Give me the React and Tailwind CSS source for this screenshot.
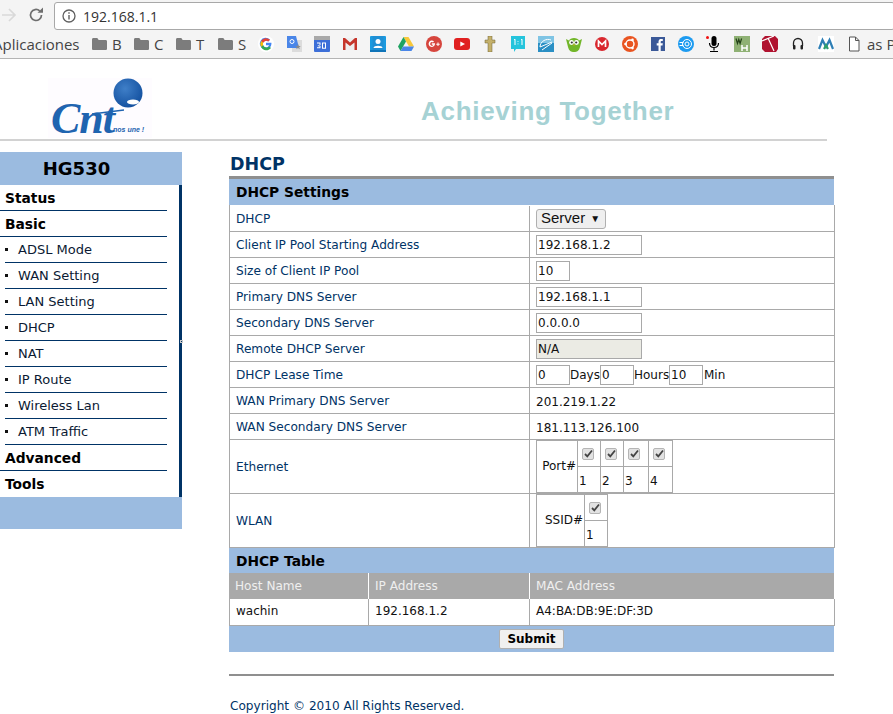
import React from "react";

const labels = "border-b border-[#a9a9a9] flex h-[26px] box-border";

function Folder() {
  return (
    <svg width="15" height="12" viewBox="0 0 15 12">
      <path d="M0 1.500C0 .7.6 0 1.300 0h4l1.400 2h7c.7 0 1.300.6 1.300 1.300v7.400c0 .7-.6 1.300-1.300 1.300H1.300C.6 12 0 11.400 0 10.700z" fill="#7c7c7c" />
    </svg>
  );
}

function Mark({ name, children }) {
  return (
    <svg width="16" height="16" viewBox="0 0 16 16" className="shrink-0" aria-label={name}>
      {children}
    </svg>
  );
}

const bookmarks = [
  ["Google", <>
    <circle cx="8" cy="8" r="8" fill="#fff" />
    <path d="M13.400 6.800H8v2.500h3.100A3.300 3.300 0 1 1 10.200 5.500l1.800-1.800A5.800 5.800 0 1 0 13.400 6.800z" fill="#4285f4" />
    <path d="M3.100 5a5.800 5.800 0 0 1 8.900-1.300L10.200 5.500A3.300 3.300 0 0 0 5.200 6.700z" fill="#ea4335" />
    <path d="M3.100 5l2.100 1.700a3.300 3.300 0 0 0 0 2.600L3.100 11a5.800 5.800 0 0 1 0-6z" fill="#fbbc05" />
    <path d="M3.100 11l2.100-1.700a3.300 3.300 0 0 0 5.900.9l1.900 1.700A5.800 5.800 0 0 1 3.100 11z" fill="#34a853" />
  </>],
  ["Translate", <>
    <rect x="6" y="4" width="10" height="12" fill="#dcdcdc" />
    <path d="M1 0h9l3 12H1z" fill="#4a86e8" />
    <circle cx="6" cy="5.500" r="2" fill="none" stroke="#fff" strokeWidth="1" />
    <path d="M12 8l.8 2h2l-1.600 1.300.6 2-1.800-1.200-1.700 1.200.6-2L9.300 10h2z" fill="#8a8a8a" />
  </>],
  ["Calendar", <>
    <rect width="16" height="16" rx="1" fill="#3d6fd8" />
    <rect width="16" height="4" fill="#a9a9a9" />
    <path d="M3 6.500h3.500v2.500H4.500v.8h2v2.500H3v-1h2.500v-1H3.800v-.8h1.700V7.500H3zM8 6.500h4v6.300H8zM9 7.500v4.300h2V7.500z" fill="#fff" />
  </>],
  ["Gmail", <>
    <rect x="1" y="2" width="14" height="12" fill="#eee" />
    <path d="M1 2h2l5 4.500L13 2h2v12h-2.500V6.500L8 10 3.500 6.500V14H1z" fill="#c5352b" />
  </>],
  ["Contacts", <>
    <rect width="16" height="16" rx="1" fill="#1a9ae0" />
    <rect x="2.500" y="0" width="11" height="14" fill="#1f8fd4" />
    <circle cx="8" cy="5.500" r="2.500" fill="#fff" />
    <path d="M3.500 12c0-3 9-3 9 0z" fill="#fff" />
    <rect y="14" width="16" height="2" fill="#0f74b8" />
  </>],
  ["Drive", <>
    <path d="M5.500 1h5l5.500 9.500h-5z" fill="#f8c83a" />
    <path d="M5.500 1L0 10.500 2.500 15l5.500-9.500z" fill="#1ea362" />
    <path d="M2.500 15h11l2.500-4.500H5z" fill="#4a86e8" />
  </>],
  ["Google Plus", <>
    <circle cx="8" cy="8" r="8" fill="#d6453d" />
    <path d="M9 7.300H5.800v1.500h1.700a1.800 1.800 0 1 1-.5-2.400l1-1a3.200 3.200 0 1 0 1 2.400z" fill="#fff" />
    <path d="M11.500 6.500h1v1.200h1.200v1h-1.200v1.200h-1V8.700h-1.200v-1h1.200z" fill="#fff" />
  </>],
  ["YouTube", <>
    <rect y="2" width="16" height="12" rx="3" fill="#e02020" />
    <path d="M6.300 5.500L11 8l-4.700 2.500z" fill="#fff" />
  </>],
  ["Cross", <>
    <path d="M6 0h4v4h3v3h-3v9H6V7H3V4h3z" fill="#c4b06a" stroke="#6d6136" strokeWidth=".5" />
  </>],
  ["1:1", <>
    <path d="M1 0h14v13H6l-2 3v-3H1z" fill="#25c4dc" />
    <path d="M4 4l1-.8V9M11 4l1-.8V9M8 5v.8M8 7.500v.8" stroke="#fff" strokeWidth="1" fill="none" />
  </>],
  ["Swoosh", <>
    <rect width="16" height="16" fill="#2a8fc4" />
    <rect width="16" height="7" fill="#7fc4e4" />
    <path d="M2 11C2 5 9 2 13 4M2 11l12-5M4 14l10-7" stroke="#fff" strokeWidth="1" fill="none" />
  </>],
  ["Owl", <>
    <path d="M0 3l3 1.500C4 1 12 1 13 4.500L16 3l-2 8c-1 4-3 5-6 5s-5-1-6-5z" fill="#72b62a" />
    <circle cx="5.500" cy="6.500" r="2.400" fill="#fff" />
    <circle cx="10.500" cy="6.500" r="2.400" fill="#fff" />
    <circle cx="5.800" cy="6.500" r="1.100" fill="#333" />
    <circle cx="10.200" cy="6.500" r="1.100" fill="#333" />
    <path d="M7 8.500h2L8 10z" fill="#e8a020" />
  </>],
  ["Mega", <>
    <circle cx="8" cy="8" r="7" fill="#d9272e" />
    <path d="M4.500 11V5l3.500 3.500L11.500 5v6" stroke="#fff" strokeWidth="1.700" fill="none" />
  </>],
  ["Ubuntu", <>
    <circle cx="8" cy="8" r="8" fill="#e95420" />
    <circle cx="8" cy="8" r="4" fill="none" stroke="#fff" strokeWidth="1.400" />
    <circle cx="3.500" cy="8" r="1.300" fill="#fff" />
    <circle cx="10.500" cy="3.900" r="1.300" fill="#fff" />
    <circle cx="10.500" cy="12.100" r="1.300" fill="#fff" />
  </>],
  ["Facebook", <>
    <rect x="1" y="1" width="14" height="14" fill="#3b5998" />
    <path d="M10.700 15V9.500h1.800l.3-2.200h-2.100V6c0-.6.2-1 1-1h1.100V3.100c-1.900-.3-4.300-.3-4.300 2.600v1.600H6.700v2.200h1.800V15z" fill="#fff" />
  </>],
  ["Disc", <>
    <circle cx="8" cy="8" r="8" fill="#1d9bf0" />
    <circle cx="9" cy="8" r="4.500" fill="none" stroke="#fff" strokeWidth="1" />
    <circle cx="9" cy="8" r="2" fill="none" stroke="#fff" strokeWidth="1" />
    <path d="M1.500 6.500h4M1.500 9.500h4" stroke="#fff" strokeWidth="1" />
  </>],
  ["Mic", <>
    <circle cx="1.500" cy="1.500" r="1.500" fill="#f01010" />
    <rect x="5.500" y="0" width="5" height="10" rx="2.500" fill="#000" />
    <path d="M3.500 7c0 6 9 6 9 0M8 12v2.500M4 15.500h8" stroke="#000" strokeWidth="1.200" fill="none" />
  </>],
  ["WH", <>
    <rect width="16" height="16" fill="#8fb174" />
    <path d="M2 2.500l1.500 5 1.300-4 1.300 4 1.500-5" stroke="#234018" strokeWidth="1.200" fill="none" />
    <path d="M8 9v6M13 9v6M8 12h5" stroke="#fff" strokeWidth="1.500" fill="none" />
  </>],
  ["Red", <>
    <path d="M3 0h10l3 3v10l-2 3H3l-3-3V3z" fill="#b0122f" />
    <path d="M0 5l12-5M6 2l6 13" stroke="#fff" strokeWidth="1.200" fill="none" />
  </>],
  ["Headphones", <>
    <path d="M3.500 10V7a4.500 4.500 0 0 1 9 0v3" stroke="#222" strokeWidth="1.300" fill="none" />
    <rect x="3" y="9" width="2.500" height="4.500" rx="1" fill="#222" />
    <rect x="10.500" y="9" width="2.500" height="4.500" rx="1" fill="#222" />
  </>],
  ["M", <>
    <rect width="16" height="16" fill="#fff" />
    <path d="M1 13l3.500-9 3.500 7 3.500-7 3.500 9" stroke="#2f7fb5" strokeWidth="2.200" fill="none" />
    <path d="M6 13l2-4 2 4" stroke="#2ea06a" strokeWidth="2" fill="none" />
  </>],
  ["Page", <>
    <path d="M3.500 1h6l3.500 3.500V15H3.500zM9.500 1v3.500H13" stroke="#555" strokeWidth="1" fill="#fff" />
  </>],
];

function Toolbar() {
  return (
    <div className="h-[59px] border-b border-[#b4b4b4] bg-[#f4f4f4] font-['Open_Sans',sans-serif] overflow-hidden whitespace-nowrap box-border">
      <div className="h-[30px] flex items-center">
        <svg width="16" height="16" viewBox="0 0 16 16" className="ml-[1px]">
          <path d="M1 8h13M8 2l6 6-6 6" stroke="#d9d9d9" strokeWidth="1.700" fill="none" />
        </svg>
        <svg width="16" height="16" viewBox="0 0 16 16" className="ml-[11px]">
          <path d="M13.500 8A5.500 5.500 0 1 1 11.700 3.900" stroke="#6e6e6e" strokeWidth="1.700" fill="none" />
          <path d="M9.500 5.800H15V.5z" fill="#6e6e6e" />
        </svg>
        <div className="ml-[10px] flex-1 h-[28px] -mr-[2px] mt-[2px] bg-white border border-[#a8a8a8] rounded-[3px] flex items-center pl-[7px] box-border">
          <svg width="14" height="14" viewBox="0 0 14 14">
            <circle cx="7" cy="7" r="6" fill="none" stroke="#5f5f5f" strokeWidth="1.300" />
            <path d="M7 6v4.500M7 3.300v1.400" stroke="#5f5f5f" strokeWidth="1.400" />
          </svg>
          <span className="ml-[7px] text-[14px] text-[#333]">192.168.1.1</span>
        </div>
      </div>
      <div className="h-[28px] flex items-center text-[15px] text-[#444]">
        <span className="-ml-[7px] w-[99px] shrink-0">Aplicaciones</span>
        {["B", "C", "T", "S"].map((l) => (
          <div key={l} className="w-[42px] shrink-0 flex items-center gap-[5px] last:w-[41px]">
            <Folder />
            <span>{l}</span>
          </div>
        ))}
        <div className="flex items-center gap-3 ml-[-2px]">
          {bookmarks.map(([name, art]) => (
            <Mark key={name} name={name}>{art}</Mark>
          ))}
        </div>
        <span className="ml-[5px]">as P</span>
      </div>
    </div>
  );
}

function Logo() {
  return (
    <div className="relative w-[104px] h-[60px] ml-[48px] bg-[#fefcff] text-[#1f64b0] overflow-hidden">
      <svg width="104" height="60" viewBox="0 0 104 60" className="absolute left-0 top-0">
        <defs>
          <radialGradient id="ball" cx="0.4" cy="0.35" r="0.7">
            <stop offset="0" stopColor="#3f7fc8" />
            <stop offset="1" stopColor="#124f9e" />
          </radialGradient>
        </defs>
        <circle cx="80" cy="15" r="14.500" fill="url(#ball)" />
        <ellipse cx="85" cy="24" rx="6" ry="2.500" fill="#fff" />
        <path d="M44 36l32-4" stroke="#1f64b0" strokeWidth="1.500" />
      </svg>
      <span className="absolute left-[3px] top-[19px] font-['Liberation_Serif',serif] italic font-bold text-[44px] leading-[44px] tracking-[-1px]">Cnt</span>
      <span className="absolute left-[65px] top-[47px] font-['Liberation_Sans',sans-serif] italic font-bold text-[7px] leading-[10px]">nos une !</span>
    </div>
  );
}

function Banner() {
  return (
    <div className="w-[827px] h-[82px] border-b-2 border-[#d2d2d2] box-border flex items-start pt-[19px]">
      <Logo />
      <span className="ml-[269px] mt-[18px] font-['Liberation_Sans',sans-serif] font-bold text-[26px] leading-[30px] text-[#a6d2d4] tracking-[0.7px]">Achieving Together</span>
    </div>
  );
}

function Sidebar() {
  const top = "h-[26px] flex items-center border-b border-[#003366] font-bold text-[13.800px] text-black pl-[5px] pt-[2px] box-border";
  const sub = "h-[26px] flex items-center border-b border-[#003366] text-[13px] text-[#0b1a33] ml-[5px] box-border";
  const items = ["ADSL Mode", "WAN Setting", "LAN Setting", "DHCP", "NAT", "IP Route", "Wireless Lan", "ATM Traffic"];
  return (
    <div className="w-[182px] shrink-0 mt-[11px]">
      <div className="h-[33px] bg-[#9bbbe0] flex items-center justify-center pr-[29px] font-bold text-[18px] text-black">HG530</div>
      <div className="relative border-r-[3px] border-[#003366] pr-[12px]">
        <div className={top}>Status</div>
        <div className={top}>Basic</div>
        {items.map((t) => (
          <div key={t} className={sub}>
            <span className="w-[3px] h-[3px] bg-[#111] shrink-0" />
            <span className="ml-[10px]">{t}</span>
          </div>
        ))}
        <div className={top}>Advanced</div>
        <div className="h-[26px] flex items-center font-bold text-[13.800px] text-black pl-[5px] box-border">Tools</div>
        <span className="absolute right-[-4px] top-[155px] w-[3px] h-[3px] border border-[#c8c8c8]" />
      </div>
      <div className="h-[32px] bg-[#9bbbe0]" />
    </div>
  );
}

function Row({ label, children, tall }) {
  return (
    <div className={tall ? "border-b border-[#a9a9a9] flex h-[54px] box-border" : labels}>
      <div className="w-[300px] shrink-0 border-r border-[#a9a9a9] pl-[6px] pt-[2px] flex items-center text-[#003366] box-border">{label}</div>
      <div className="flex-1 pl-[6px] flex items-center text-[#111]">{children}</div>
    </div>
  );
}

function Value({ children }) {
  return <span className="pt-[2px] text-[12px]">{children}</span>;
}

function Field({ value, width, gray }) {
  return (
    <input
      readOnly
      value={value}
      style={{ width }}
      className={"h-[20px] box-border border border-[#a9a9a9] px-[1px] text-[12px] text-[#111] outline-none " + (gray ? "bg-[#ebebe4]" : "bg-white")}
    />
  );
}

function Tick() {
  return (
    <span className="w-[12px] h-[12px] rounded-[2px] border border-[#b5b5b5] bg-[#e2e2e2] flex items-center justify-center">
      <svg width="9" height="9" viewBox="0 0 9 9">
        <path d="M1 5l2.300 2.300L8 1.500" stroke="#444" strokeWidth="1.800" fill="none" />
      </svg>
    </span>
  );
}

function PortTable({ title, nums, titleWidth, widths }) {
  return (
    <div className="flex h-[53px] border border-[#a9a9a9] text-[12px] box-border">
      <div className="flex items-center justify-end pr-[1px] pb-[2px] box-border" style={{ width: titleWidth }}>{title}</div>
      {nums.map((n, i) => (
        <div key={n} className="border-l border-[#a9a9a9] flex flex-col box-border" style={{ width: widths[i] }}>
          <div className="h-[26px] border-b border-[#a9a9a9] flex items-center pl-[4px] box-border"><Tick /></div>
          <div className="flex-1 flex items-center pl-[1px] pt-[2px]">{n}</div>
        </div>
      ))}
    </div>
  );
}

function Main() {
  return (
    <div className="ml-[47px] w-[605px] shrink-0 mt-[11px]">
      <div className="h-[24px] pt-[1px] font-bold text-[17.500px] leading-[23px] text-[#003366] pl-[1px] box-border">DHCP</div>
      <div className="h-[3px] bg-[#8f8f8f]" />
      <div className="h-[26px] bg-[#9bbbe0] flex items-center pl-[7px] font-bold text-[13.800px] text-black box-border">DHCP Settings</div>
      <div className="w-[606px] pt-[1px] border-x border-[#a9a9a9] text-[12.150px] box-border">
        <Row label="DHCP">
          <span className="w-[70px] h-[20px] border border-[#b0b0b0] rounded-[3px] bg-[#efefef] flex items-center pl-[4px] gap-[5px] font-['Liberation_Sans',sans-serif] text-[15px] text-[#111] box-border">
            Server <span className="text-[10px]">▼</span>
          </span>
        </Row>
        <Row label="Client IP Pool Starting Address"><Field value="192.168.1.2" width={106} /></Row>
        <Row label="Size of Client IP Pool"><Field value="10" width={34} /></Row>
        <Row label="Primary DNS Server"><Field value="192.168.1.1" width={106} /></Row>
        <Row label="Secondary DNS Server"><Field value="0.0.0.0" width={106} /></Row>
        <Row label="Remote DHCP Server"><Field value="N/A" width={106} gray /></Row>
        <Row label="DHCP Lease Time">
          <Field value="0" width={34} />
          <span className="w-[30px] text-center text-[12px]">Days</span>
          <Field value="0" width={34} />
          <span className="w-[35px] text-center text-[12px]">Hours</span>
          <Field value="10" width={34} />
          <span className="ml-[1px] text-[12px]">Min</span>
        </Row>
        <Row label="WAN Primary DNS Server"><Value>201.219.1.22</Value></Row>
        <Row label="WAN Secondary DNS Server"><Value>181.113.126.100</Value></Row>
        <Row label="Ethernet" tall>
          <PortTable title="Port#" nums={[1, 2, 3, 4]} titleWidth={40} widths={[23, 23, 25, 24]} />
        </Row>
        <Row label="WLAN" tall>
          <PortTable title="SSID#" nums={[1]} titleWidth={47} widths={[23]} />
        </Row>
      </div>
      <div className="h-[25px] bg-[#9bbbe0] flex items-center pl-[7px] pt-[1px] font-bold text-[13.800px] text-black box-border">DHCP Table</div>
      <div className="h-[26px] bg-[#a9a9a9] flex text-[12.100px] text-[#efefef]">
        <div className="w-[140px] pl-[6px] flex items-center border-r border-white box-border">Host Name</div>
        <div className="w-[161px] pl-[6px] flex items-center border-r border-white box-border">IP Address</div>
        <div className="flex-1 pl-[6px] flex items-center">MAC Address</div>
      </div>
      <div className="w-[606px] h-[27px] flex border-x border-b border-[#a9a9a9] text-[12px] text-[#111] box-border">
        <div className="w-[139px] pl-[6px] pb-[2px] flex items-center border-r border-[#a9a9a9] box-border">wachin</div>
        <div className="w-[161px] pl-[6px] pb-[2px] flex items-center border-r border-[#a9a9a9] box-border">192.168.1.2</div>
        <div className="flex-1 pl-[6px] pb-[2px] flex items-center">A4:BA:DB:9E:DF:3D</div>
      </div>
      <div className="h-[26px] bg-[#9bbbe0] flex items-center justify-center">
        <button className="w-[65px] h-[20px] border border-[#b0b0b0] rounded-[2px] bg-[#f0f0f0] font-bold text-[12px] text-black">Submit</button>
      </div>
      <div className="mt-[22px] h-[2px] bg-[#8f8f8f]" />
      <div className="mt-[21px] text-[12.100px] text-[#003366] pl-[1px]">Copyright © 2010 All Rights Reserved.</div>
    </div>
  );
}

export default function App() {
  return (
    <div className="w-[893px] h-[714px] overflow-hidden bg-white font-['DejaVu_Sans',Verdana,sans-serif]">
      <Toolbar />
      <Banner />
      <div className="flex">
        <Sidebar />
        <Main />
      </div>
    </div>
  );
}
